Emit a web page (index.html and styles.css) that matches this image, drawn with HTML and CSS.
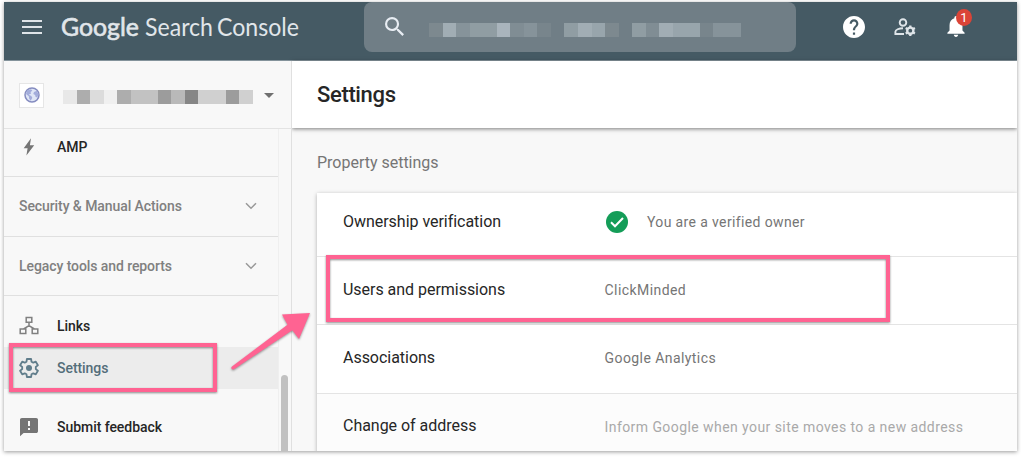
FILE: index.html
```html
<!DOCTYPE html>
<html lang="en">
<head>
<meta charset="utf-8">
<title>Google Search Console - Settings</title>
<link rel="stylesheet" href="styles.css">
</head>
<body>
<div class="window">
    <header class="header">
        <svg class="menu" viewBox="0 0 20 14"><path d="M0 1h20M0 7h20M0 13h20"/></svg>
        <svg class="logo" width="246" height="40" viewBox="0 0 246 40">
            <text class="bold" x="0" y="24" textLength="78" lengthAdjust="spacingAndGlyphs">Google</text>
            <text x="84" y="24" textLength="68" lengthAdjust="spacingAndGlyphs">Search</text>
            <text x="156" y="24" textLength="82" lengthAdjust="spacingAndGlyphs">Console</text>
        </svg>
        <div class="search">
            <svg class="glass" viewBox="3 3 17.5 17.5"><path d="M15.5 14h-.79l-.28-.27A6.47 6.47 0 0 0 16 9.5 6.5 6.5 0 1 0 9.5 16c1.61 0 3.09-.59 4.23-1.57l.27.28v.79l5 4.99L20.49 19l-4.99-5zm-6 0a4.5 4.5 0 1 1 0-9 4.5 4.5 0 0 1 0 9z"/></svg>
            <div class="mask">
                <i class="b2"></i><i class="b7"></i><i class="b4"></i><i class="b5"></i><i class="b5"></i><i class="b8"></i><i class="b3"></i><i class="b4"></i><i class="b1"></i><i></i>
                <i class="b5"></i><i class="b7"></i><i class="b6"></i><i class="b2"></i><i></i>
                <i class="b5"></i><i class="b3"></i><i class="b7"></i><i class="b6"></i><i class="b6"></i><i class="b1"></i><i class="b4"></i><i class="b4"></i>
            </div>
        </div>
        <div class="tools">
            <svg class="help" viewBox="2 2 20 20"><path d="M12 2C6.48 2 2 6.48 2 12s4.48 10 10 10 10-4.48 10-10S17.52 2 12 2zm1 17h-2v-2h2v2zm2.07-7.75l-.9.92C13.45 12.9 13 13.5 13 15h-2v-.5c0-1.1.45-2.1 1.17-2.83l1.24-1.26c.37-.36.59-.86.59-1.41 0-1.1-.9-2-2-2s-2 .9-2 2H8c0-2.21 1.79-4 4-4s4 1.79 4 4c0 .88-.36 1.68-.93 2.25z"/></svg>
            <svg class="users" viewBox="0 0 22 18">
                <circle cx="9" cy="4.5" r="3.3"/>
                <path d="M10 16H1.4v-2.2c0-2 3.700-3.600 7.600-3.600"/>
                <circle class="cog" cx="16.3" cy="12.7" r="3.1"/>
                <path class="teeth" d="M16.3 7.4v2M16.3 16v2M11.7 10l1.8 1M19.1 14.4l1.8 1M20.9 10l-1.8 1M13.5 14.4l-1.8 1"/>
            </svg>
            <div class="alerts">
                <svg class="bell" viewBox="4 2.5 16 19.5"><path d="M12 22c1.1 0 2-.9 2-2h-4c0 1.1.89 2 2 2zm6-6v-5c0-3.07-1.64-5.64-4.5-6.32V4a1.5 1.5 0 0 0-3 0v.68C7.63 5.36 6 7.92 6 11v5l-2 2v1h16v-1l-2-2z"/></svg>
                <span class="badge">1</span>
            </div>
        </div>
    </header>

    <div class="body">
        <nav class="sidebar">
            <div class="property">
                <div class="favicon">
                    <svg viewBox="0 0 16 16"><circle cx="8" cy="8" r="7"/><path d="M3 3.5l4-1.3 1.3 1.6-1.8 1.1.6 1.5-2.4 1.4 2.6 1.2 1 1.8-1.600 3-1.500-2-.4-2.500L2 7zM10 5l2.800-1.200L14.400 7l-1 3.600-1.800-.6-.5-2.100L9.300 7z"/></svg>
                </div>
                <div class="mask">
                    <i class="g1"></i><i class="g6"></i><i class="g2"></i><i class="g0"></i><i class="g6"></i><i class="g4"></i><i class="g4"></i><i class="g7"></i><i class="g5"></i><i class="g8"></i><i class="g3"></i><i class="g3"></i><i class="g7"></i><i class="g3"></i>
                </div>
                <span class="caret"></span>
            </div>
            <div class="scroller">
                <div class="list">
                    <a class="item amp">
                        <svg viewBox="0 0 20 20"><path class="fill" d="M12 1.200L4.700 11.300h3.900L7.400 18.500l7.800-10.300h-4.300z"/></svg>
                        AMP
                    </a>
                    <div class="group">Security &amp; Manual Actions
                        <svg class="chevron" viewBox="0 0 12 8"><path d="M1 1.2l5 5 5-5"/></svg>
                    </div>
                    <div class="group">Legacy tools and reports
                        <svg class="chevron" viewBox="0 0 12 8"><path d="M1 1.2l5 5 5-5"/></svg>
                    </div>
                    <a class="item links">
                        <svg viewBox="0 0 20 20"><path class="line" d="M7.2 1.6h5.6v4.6H7.2zM1.2 13h5.6v4.6H1.2zM13.2 13h5.6v4.6h-5.6zM10 6.2v3.6M4.6 13L10 9.6l5.4 3.4"/></svg>
                        Links
                    </a>
                    <a class="item active">
                        <svg viewBox="0 0 20 20"><path class="line gear" d="M7.9 1h4.2l.4 2.7 1.8 1 2.5-1 2.1 3.5-2.1 1.7v2.2l2.1 1.7-2.1 3.5-2.5-1-1.8 1-.4 2.7H7.9l-.4-2.7-1.8-1-2.5 1-2.1-3.5 2.1-1.7V8.900L1.100 7.200l2.100-3.500 2.500 1 1.800-1z"/><circle class="fill" cx="10" cy="10" r="3"/></svg>
                        Settings
                    </a>
                    <a class="item feedback">
                        <svg viewBox="0 0 20 20"><path class="fill" fill-rule="evenodd" d="M2.800 1h14.400c1 0 1.800.8 1.800 1.800v11.400c0 1-.8 1.800-1.800 1.800H4.600L1 19.300V2.800C1 1.800 1.800 1 2.800 1zM9 4v5h2V4zM9 11v2h2v-2z"/></svg>
                        Submit feedback
                    </a>
                </div>
                <div class="track"><div class="thumb"></div></div>
            </div>
        </nav>

        <main class="main">
            <h1 class="title">Settings</h1>
            <h2 class="subtitle">Property settings</h2>
            <div class="card">
                <div class="row">
                    <div class="name">Ownership verification</div>
                    <div class="value verified">
                        <svg viewBox="0 0 22 22"><circle cx="11" cy="11" r="11"/><path d="M5 11.300l4 4 8-8.300"/></svg>
                        You are a verified owner
                    </div>
                </div>
                <div class="row">
                    <div class="name">Users and permissions</div>
                    <div class="value">ClickMinded</div>
                </div>
                <div class="row">
                    <div class="name">Associations</div>
                    <div class="value">Google Analytics</div>
                </div>
                <div class="row disabled">
                    <div class="name">Change of address</div>
                    <div class="value">Inform Google when your site moves to a new address</div>
                </div>
            </div>
        </main>
    </div>
</div>

<!-- annotations over the page -->
<div class="mark mark-settings"></div>
<div class="mark mark-users"></div>
<svg class="arrow" width="90" height="70" viewBox="0 0 90 70"><path d="M5 60.500L60.500 18.800 55 8.500 83 7 72 33 65.300 24.300 7 63.200Q4.200 64 4.300 61.500Z"/></svg>
</body>
</html>
```
FILE: styles.css
```css
* { box-sizing: border-box; }
body { margin: 0; padding: 2px 4px; height: 457px; overflow: hidden; background: #fff; font-family: Roboto, "Liberation Sans", sans-serif; color: #262626; }
svg { display: block; flex: none; }
h1, h2 { margin: 0; }

.window { width: 1013px; height: 449px; display: flex; flex-direction: column; overflow: hidden; background: #f8f8f8; box-shadow: 0 1px 4px rgba(0,0,0,.4); }

/* header */
.header { height: 59px; flex: none; display: flex; align-items: flex-start; background: #455a64; border-bottom: 1px solid #84939b; }
.menu { width: 20px; height: 14px; margin: 18px 19px 0 18px; }
.menu path { stroke: #dfe4e8; stroke-width: 2; }
.logo { margin-top: 10px; overflow: visible; fill: #e1e6ea; font: 25px Lato, sans-serif; }
.logo .bold { stroke: #e1e6ea; stroke-width: .6; }
.search { width: 432px; height: 50px; margin-left: 57px; padding: 15px 0 0 21px; display: flex; background: #707e86; border-radius: 8px; }
.glass { width: 19px; height: 19px; fill: #e8edf3; }
.mask { display: flex; height: 14px; }
.mask i { width: 13.550px; flex: none; }
.search .mask { margin: 6px 0 0 25px; }
.b1 { background: #78858c; }
.b2 { background: #7d898f; }
.b3 { background: #808d94; }
.b4 { background: #86939a; }
.b5 { background: #909da3; }
.b6 { background: #98a5ac; }
.b7 { background: #a1adb4; }
.b8 { background: #a9b4bc; }
.tools { display: flex; margin-left: 46.500px; }
.help { width: 22px; height: 22px; margin-top: 13.500px; fill: #fff; }
.users { width: 22px; height: 18px; margin: 16px 0 0 29px; fill: none; stroke: #dfe5e9; stroke-width: 1.900; }
.users .cog { stroke-width: 2.400; }
.users .teeth { stroke-width: 2.300; }
.alerts { position: relative; margin: 14px 0 0 31px; }
.bell { width: 18px; height: 21px; fill: #fff; }
.badge { position: absolute; left: 9.500px; top: -7.500px; width: 16px; height: 17px; border-radius: 50%; background: #db4437; color: #fff; font-size: 13px; line-height: 17px; text-align: center; }

.body { flex: 1; min-height: 0; display: flex; }

/* sidebar */
.sidebar { position: relative; z-index: 1; width: 288px; flex: none; display: flex; flex-direction: column; background: #f8f8f8; border-right: 1px solid #e0e0e0; }
.property { height: 68px; flex: none; display: flex; align-items: center; padding: 1px 0 0 15px; border-bottom: 1px solid #e3e3e3; }
.favicon { width: 25px; height: 25px; padding: 3.500px; background: #fff; border: 1px solid #e6e6e6; }
.favicon circle { fill: #dfe6f6; stroke: #858cc0; stroke-width: 1.500; }
.favicon path { fill: #a3addb; }
.property .mask { margin: 3px 0 0 19px; }
.g0 { background: #f0f0f0; }
.g1 { background: #e8e8e8; }
.g2 { background: #dcdcdc; }
.g3 { background: #d0d0d0; }
.g4 { background: #c2c2c2; }
.g5 { background: #b9b9b9; }
.g6 { background: #adadad; }
.g7 { background: #9c9c9c; }
.g8 { background: #868686; }
.caret { margin: 0 0 0 11px; border: 5px solid transparent; border-top-color: #707070; border-bottom: 0; }
.scroller { flex: 1; min-height: 0; display: flex; overflow: hidden; }
.list { width: 275px; flex: none; border-right: 1px solid #efefef; }
.item { display: flex; align-items: center; height: 42px; padding-left: 15px; font-size: 14px; font-weight: 500; letter-spacing: -.05px; }
.item svg { width: 20px; height: 20px; margin-right: 18px; }
.item .fill { fill: #757575; }
.item .line { fill: none; stroke: #808080; stroke-width: 1.500; }
.item.amp { height: 48px; padding-bottom: 12px; border-bottom: 1px solid #e0e0e0; }
.item.links { margin-top: 9px; }
.item.active { background: #ececec; color: #546e7a; }
.item.active .fill { fill: #607d8b; }
.item.active .line { stroke: #607d8b; stroke-width: 1.800; stroke-linejoin: round; }
.item.feedback { margin-top: 17px; }
.group { display: flex; justify-content: space-between; align-items: center; height: 59.500px; padding: 0 21px 0 15px; border-bottom: 1px solid #e0e0e0; color: #808080; font-size: 14px; font-weight: 500; letter-spacing: -.08px; }
.chevron { width: 12px; height: 8px; }
.chevron path { fill: none; stroke: #999; stroke-width: 1.500; }
.track { width: 12px; padding: 246px 0 0 2px; }
.thumb { width: 7px; height: 90px; border-radius: 4px; background: #c1c1c1; }

/* content */
.main { flex: 1; min-width: 0; }
.title { height: 67px; padding-left: 25px; background: #fff; font-size: 22px; font-weight: 500; line-height: 67px; letter-spacing: -.35px; box-shadow: 0 1px 4px rgba(0,0,0,.5); }
.subtitle { height: 65px; padding: 25px 0 0 25px; font-size: 16px; font-weight: 400; line-height: 20px; letter-spacing: -.01px; color: #757575; }
.card { height: 300px; margin-left: 25px; background: #fff; box-shadow: 0 1px 4px rgba(0,0,0,.3); }
.row { display: flex; align-items: center; height: 68.300px; padding: 0 0 3px 26px; border-bottom: 1px solid #e4e4e4; }
.row:first-child { height: 64px; padding-bottom: 6px; }
.row.disabled { background: #fcfcfc; }
.name { width: 261.500px; font-size: 16px; letter-spacing: -.03px; }
.value { display: flex; align-items: center; padding-top: 2px; font-size: 14px; letter-spacing: .43px; color: #757575; }
.verified { padding-top: 1px; letter-spacing: .37px; }
.verified svg { width: 22px; height: 22px; margin: 0 19px 0 1.500px; }
.verified circle { fill: #149d58; }
.verified path { fill: none; stroke: #fff; stroke-width: 2; }
.disabled .value { color: #a9a9a9; }

/* annotations */
.mark { position: absolute; z-index: 2; border: 4px solid #ff6392; filter: drop-shadow(0 1px 1px rgba(0,0,0,.45)); }
.mark-settings { left: 9px; top: 343px; width: 208px; height: 49px; }
.mark-users { left: 326px; top: 255px; width: 564px; height: 67px; }
.arrow { position: absolute; z-index: 2; left: 227px; top: 306px; fill: #ff6392; filter: drop-shadow(0 1px 1px rgba(0,0,0,.4)); }
```
